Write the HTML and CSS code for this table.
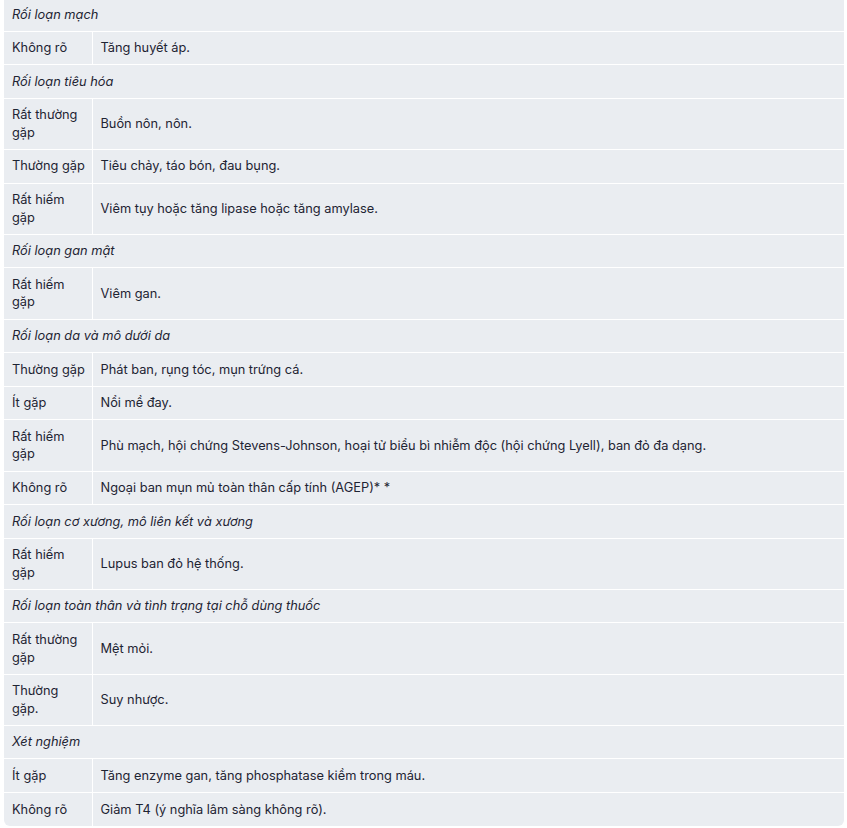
FILE: index.html
```html
<!DOCTYPE html>
<html lang="vi">
<head>
    <meta charset="UTF-8">
    <meta name="viewport" content="width=device-width, initial-scale=1.0">
    <title>Tác dụng không mong muốn</title>
    <link rel="stylesheet" href="styles.css">
</head>
<body>

<div class="table-wrap">
    <table class="effects">
        <colgroup>
            <col class="col-freq">
            <col>
        </colgroup>
        <tbody>
            <tr><td colspan="2" class="group">Rối loạn mạch</td></tr>
            <tr><td class="freq">Không rõ</td><td>Tăng huyết áp.</td></tr>

            <tr><td colspan="2" class="group">Rối loạn tiêu hóa</td></tr>
            <tr><td class="freq">Rất thường gặp</td><td>Buồn nôn, nôn.</td></tr>
            <tr><td class="freq">Thường gặp</td><td>Tiêu chảy, táo bón, đau bụng.</td></tr>
            <tr><td class="freq">Rất hiếm gặp</td><td>Viêm tụy hoặc tăng lipase hoặc tăng amylase.</td></tr>

            <tr><td colspan="2" class="group">Rối loạn gan mật</td></tr>
            <tr><td class="freq">Rất hiếm gặp</td><td>Viêm gan.</td></tr>

            <tr><td colspan="2" class="group">Rối loạn da và mô dưới da</td></tr>
            <tr><td class="freq">Thường gặp</td><td>Phát ban, rụng tóc, mụn trứng cá.</td></tr>
            <tr><td class="freq">Ít gặp</td><td>Nổi mề đay.</td></tr>
            <tr><td class="freq">Rất hiếm gặp</td><td>Phù mạch, hội chứng Stevens-Johnson, hoại tử biểu bì nhiễm độc (hội chứng Lyell), ban đỏ đa dạng.</td></tr>
            <tr><td class="freq">Không rõ</td><td>Ngoại ban mụn mủ toàn thân cấp tính (AGEP)* *</td></tr>

            <tr><td colspan="2" class="group">Rối loạn cơ xương, mô liên kết và xương</td></tr>
            <tr><td class="freq">Rất hiếm gặp</td><td>Lupus ban đỏ hệ thống.</td></tr>

            <tr><td colspan="2" class="group">Rối loạn toàn thân và tình trạng tại chỗ dùng thuốc</td></tr>
            <tr><td class="freq">Rất thường gặp</td><td>Mệt mỏi.</td></tr>
            <tr><td class="freq">Thường gặp.</td><td>Suy nhược.</td></tr>

            <tr><td colspan="2" class="group">Xét nghiệm</td></tr>
            <tr><td class="freq">Ít gặp</td><td>Tăng enzyme gan, tăng phosphatase kiềm trong máu.</td></tr>
            <tr><td class="freq">Không rõ</td><td>Giảm T4 (ý nghĩa lâm sàng không rõ).</td></tr>
        </tbody>
    </table>
</div>

</body>
</html>
```

FILE: styles.css
```css
* {
    margin: 0;
    padding: 0;
    box-sizing: border-box;
}
body {
    font-family: 'Inter', 'Noto Sans', sans-serif;
    background-color: #ffffff;
    color: #1e2433;
}
.table-wrap {
    width: 840px;
    margin: -2px 0 0 4px;
    background-color: #eaedf1;
    border-radius: 0 0 6px 6px;
    overflow: hidden;
}
.effects {
    width: 100%;
    border-collapse: collapse;
    table-layout: fixed;
    font-size: 12.8px;
    line-height: 17.6px;
}
.col-freq {
    width: 88px;
}
.effects td {
    padding: 7.5px 8px;
    border-top: 1px solid #ffffff;
    vertical-align: middle;
    text-align: left;
}
.effects tr:first-child td {
    border-top: none;
}
.effects td.freq {
    padding-right: 4px;
    border-right: 1px solid #ffffff;
}
.effects td.group {
    font-style: italic;
}
```
